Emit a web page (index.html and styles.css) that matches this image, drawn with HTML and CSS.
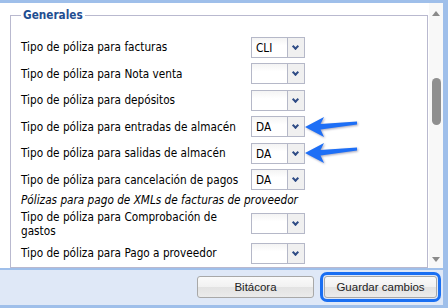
FILE: index.html
```html
<!DOCTYPE html>
<html lang="es">
<head>
    <meta charset="UTF-8">
    <title>Configuración de pólizas</title>
    <link rel="stylesheet" href="styles.css">
</head>
<body>
    <div class="window">
        <div class="window-body">
            <div class="scroll-area">
                <fieldset class="group">
                    <legend>Generales</legend>
                    <div class="form-rows">
                        <div class="form-row">
                            <label>Tipo de póliza para facturas</label>
                            <div class="select"><span class="select-value">CLI</span><span class="select-btn"></span></div>
                        </div>
                        <div class="form-row">
                            <label>Tipo de póliza para Nota venta</label>
                            <div class="select"><span class="select-value"></span><span class="select-btn"></span></div>
                        </div>
                        <div class="form-row">
                            <label>Tipo de póliza para depósitos</label>
                            <div class="select"><span class="select-value"></span><span class="select-btn"></span></div>
                        </div>
                        <div class="form-row">
                            <label>Tipo de póliza para entradas de almacén</label>
                            <div class="select"><span class="select-value">DA</span><span class="select-btn"></span></div>
                            <svg class="callout" width="54" height="24" viewBox="0 0 54 24"><path d="M1 13 L20 3 L16.5 10 L53 7.5 L53 10.5 L16.5 15.5 L20 23 Z"/></svg>
                        </div>
                        <div class="form-row">
                            <label>Tipo de póliza para salidas de almacén</label>
                            <div class="select"><span class="select-value">DA</span><span class="select-btn"></span></div>
                            <svg class="callout" width="54" height="24" viewBox="0 0 54 24"><path d="M1 13 L20 3 L16.5 10 L53 7.5 L53 10.5 L16.5 15.5 L20 23 Z"/></svg>
                        </div>
                        <div class="form-row">
                            <label>Tipo de póliza para cancelación de pagos</label>
                            <div class="select"><span class="select-value">DA</span><span class="select-btn"></span></div>
                        </div>
                        <div class="form-subtitle">Pólizas para pago de XMLs de facturas de proveedor</div>
                        <div class="form-row tall">
                            <label>Tipo de póliza para Comprobación de gastos</label>
                            <div class="select"><span class="select-value"></span><span class="select-btn"></span></div>
                        </div>
                        <div class="form-row">
                            <label>Tipo de póliza para Pago a proveedor</label>
                            <div class="select"><span class="select-value"></span><span class="select-btn"></span></div>
                        </div>
                    </div>
                </fieldset>
            </div>
            <div class="scrollbar">
                <span class="arrow-up"></span>
                <span class="thumb"></span>
                <span class="arrow-down"></span>
            </div>
        </div>
        <div class="footer">
            <button class="btn">Bitácora</button>
            <button class="btn focused">Guardar cambios</button>
        </div>
    </div>
</body>
</html>
```

FILE: styles.css
```css
body {
    margin: 0;
    font-family: "DejaVu Sans", sans-serif;
    font-stretch: condensed;
    font-size: 11.7px;
    color: #000;
    background: #fff;
}
.window {
    width: 443px;
    height: 305px;
    border-top: 3px solid #9fbfea;
    border-right: 5px solid #9fbfea;
    display: flex;
    flex-direction: column;
    background: #fff;
}
.window-body {
    height: 265px;
    display: flex;
    overflow: hidden;
}
.scroll-area {
    flex: 1;
    padding: 5px 0 0 10px;
    overflow: hidden;
}
.group {
    margin: 0 1px 0 0;
    padding: 0 10px 0 10px;
    border: 1px solid #b9b9cf;
    min-width: 0;
}
.group legend {
    padding: 0 2px;
    font-weight: bold;
    color: #1f4e91;
    line-height: 14px;
}
.form-rows {
    padding-top: 12px;
}
.form-row {
    position: relative;
    display: flex;
    align-items: center;
    height: 26.5px;
}
.form-row label {
    width: 230px;
    line-height: 14px;
}
.form-row.tall {
    height: 33px;
}
.form-subtitle {
    font-style: italic;
    line-height: 14px;
    height: 14px;
}
.select {
    display: flex;
    height: 21px;
}
.select-value {
    box-sizing: border-box;
    width: 37px;
    height: 21px;
    padding: 0 0 0 4px;
    border: 1px solid #b5b8c8;
    background: linear-gradient(#f4f4f4, #fff 40%);
    line-height: 20px;
}
.select-btn {
    position: relative;
    box-sizing: border-box;
    width: 17px;
    height: 21px;
    border: 1px solid #b5b8c8;
    border-left: none;
    background: #f0f0f0;
}
.select-btn::after {
    content: "";
    position: absolute;
    left: 5px;
    top: 6px;
    width: 3px;
    height: 3px;
    border-right: 2px solid #2f4c86;
    border-bottom: 2px solid #2f4c86;
    transform: rotate(45deg);
}
.callout {
    position: absolute;
    left: 283px;
    top: 0;
    fill: #1e6ff6;
    filter: drop-shadow(1px 1px 1px rgba(0, 0, 60, 0.35));
}
.scrollbar {
    width: 14px;
    background: #f8f8f8;
    position: relative;
}
.arrow-up,
.arrow-down {
    position: absolute;
    left: 3px;
    width: 0;
    height: 0;
    border-left: 4.5px solid transparent;
    border-right: 4.5px solid transparent;
}
.arrow-up {
    top: 8px;
    border-bottom: 5px solid #8a8a8a;
}
.arrow-down {
    top: 254px;
    border-top: 5px solid #8a8a8a;
}
.thumb {
    position: absolute;
    left: 3px;
    top: 75px;
    width: 9px;
    height: 47px;
    border-radius: 4.5px;
    background: #8f8f8f;
}
.footer {
    flex: 1;
    display: flex;
    justify-content: flex-end;
    align-items: flex-start;
    gap: 10px;
    padding: 6px 6px 0 0;
    border-top: 2px solid #9fbfea;
    border-bottom: 3px solid #9fbfea;
    background: #dfe8f7;
}
.btn {
    height: 22px;
    padding: 0;
    font-family: "Liberation Sans", Arial, sans-serif;
    font-size: 11.5px;
    color: #222;
    border: 1px solid #a8a8a8;
    border-radius: 3px;
    background: linear-gradient(#fafafa, #f1f1f1 50%, #e2e2e2 50%, #ebebeb);
    width: 117px;
}
.btn.focused {
    width: 113px;
    outline: 3px solid #1a6ff2;
    outline-offset: 1px;
}
```
